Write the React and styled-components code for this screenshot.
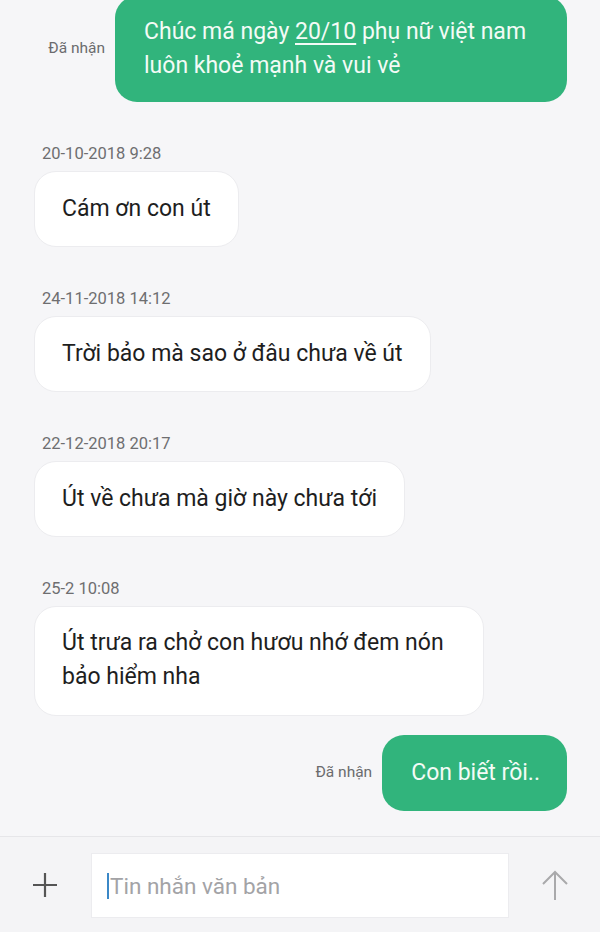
import React from 'react';
import styled, { createGlobalStyle } from 'styled-components';

const GlobalStyle = createGlobalStyle`
  html, body {
    margin: 0;
    padding: 0;
    background: #f6f6f8;
  }
  body {
    font-family: Roboto, "Noto Sans", "Liberation Sans", sans-serif;
    overflow: hidden;
  }
`;

const messages = [
  { id: 1, time: '20-10-2018 9:28', text: 'Cám ơn con út' },
  { id: 2, time: '24-11-2018 14:12', text: 'Trời bảo mà sao ở đâu chưa về út' },
  { id: 3, time: '22-12-2018 20:17', text: 'Út về chưa mà giờ này chưa tới' },
  { id: 4, time: '25-2 10:08', text: 'Út trưa ra chở con hươu nhớ đem nón bảo hiểm nha', wrap: true },
];

function App() {
  return (
    <Screen>
      <GlobalStyle />
      <Thread>
        {/* tin nhắn gửi đi đầu tiên */}
        <SentRow $top>
          <Status>Đã nhận</Status>
          <SentBubble $wide>
            Chúc má ngày <Underlined>20/10</Underlined> phụ nữ việt nam luôn khoẻ mạnh và vui vẻ
          </SentBubble>
        </SentRow>

        {messages.map((m) => (
          <ReceivedGroup key={m.id}>
            <Stamp>{m.time}</Stamp>
            <ReceivedBubble $wrap={m.wrap}>{m.text}</ReceivedBubble>
          </ReceivedGroup>
        ))}

        <SentRow>
          <Status>Đã nhận</Status>
          <SentBubble>Con biết rồi..</SentBubble>
        </SentRow>
      </Thread>

      {/* ô nhập */}
      <Composer>
        <IconButton aria-label="add">
          <svg width="26" height="26" viewBox="0 0 26 26">
            <path d="M13 1v24M1 13h24" stroke="#555" strokeWidth="2.2" fill="none" />
          </svg>
        </IconButton>
        <InputBox>
          <Caret />
          <Placeholder>Tin nhắn văn bản</Placeholder>
        </InputBox>
        <IconButton aria-label="send">
          <svg width="28" height="32" viewBox="0 0 28 32">
            <path d="M14 31V3M2 15L14 3l12 12" stroke="#a9a9ab" strokeWidth="2" fill="none" />
          </svg>
        </IconButton>
      </Composer>
    </Screen>
  );
}

const Screen = styled.div`
  width: 600px;
  height: 932px;
  display: flex;
  flex-direction: column;
  background: #f6f6f8;
  overflow: hidden;
`;

const Thread = styled.div`
  flex: 1;
  display: flex;
  flex-direction: column;
  padding: 0 33px 0 34px;
  margin-top: -4px;
`;

const SentRow = styled.div`
  display: flex;
  justify-content: flex-end;
  align-items: center;
  gap: 10px;
  margin-top: ${(p) => (p.$top ? '0' : '19px')};
`;

const Status = styled.span`
  font-size: 15.5px;
  color: #6b6b6e;
  margin-top: -2px;
`;

const SentBubble = styled.div`
  background: #31b47c;
  color: #f3fbf6;
  font-size: 23px;
  line-height: 34px;
  border-radius: 22px;
  box-sizing: border-box;
  padding: ${(p) => (p.$wide ? '19px 20px 19px 29px' : '21px 27px 21px 29px')};
  width: ${(p) => (p.$wide ? '452px' : 'auto')};
`;

const Underlined = styled.span`
  text-decoration: underline;
  text-decoration-thickness: 1.5px;
  text-underline-offset: 4px;
`;

const ReceivedGroup = styled.div`
  display: flex;
  flex-direction: column;
  align-items: flex-start;
  margin-top: 42px;
`;

const Stamp = styled.div`
  font-size: 16.5px;
  color: #6e6e70;
  margin-left: 8px;
  margin-bottom: 7px;
  line-height: 20px;
`;

const ReceivedBubble = styled.div`
  background: #ffffff;
  border: 1px solid #ececef;
  border-radius: 22px;
  color: #1e1e1e;
  font-size: 23px;
  line-height: 34px;
  box-sizing: border-box;
  padding: ${(p) => (p.$wrap ? '19px 27px 21px 27px' : '20px 27px 20px 27px')};
  width: ${(p) => (p.$wrap ? '450px' : 'auto')};
`;

const Composer = styled.div`
  height: 96px;
  box-sizing: border-box;
  border-top: 1px solid #e6e6e9;
  background: #f4f4f6;
  display: flex;
  align-items: center;
  padding: 0 17px 0 17px;
  gap: 18px;
`;

const IconButton = styled.div`
  width: 56px;
  display: flex;
  justify-content: center;
  align-items: center;
`;

const InputBox = styled.div`
  flex: 1;
  height: 65px;
  margin-top: 2px;
  background: #ffffff;
  border: 1px solid #ececef;
  box-sizing: border-box;
  display: flex;
  align-items: center;
  padding-left: 15px;
`;

const Caret = styled.span`
  width: 2px;
  height: 26px;
  background: #3b88c7;
`;

const Placeholder = styled.span`
  font-size: 22.5px;
  color: #a3a3a6;
  margin-left: 1px;
`;

export default App;
